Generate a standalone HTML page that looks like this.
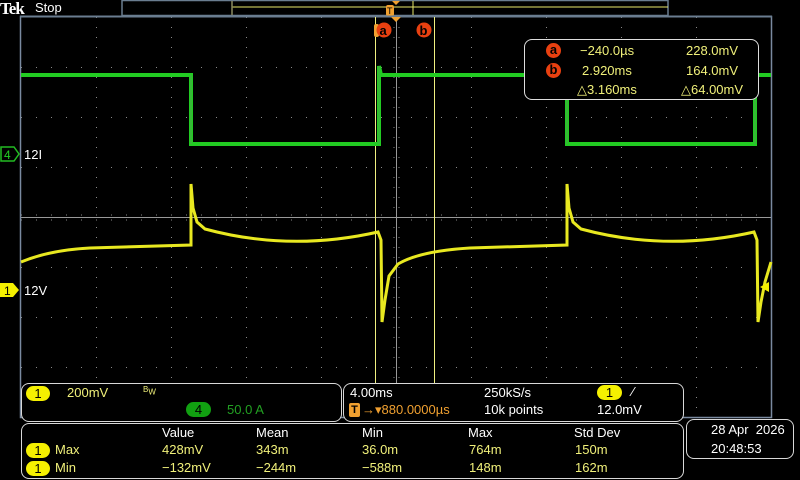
<!DOCTYPE html>
<html><head><meta charset="utf-8"><style>
html,body{margin:0;padding:0;background:#000;width:800px;height:480px;overflow:hidden;font-family:"Liberation Sans",sans-serif}
.t{position:absolute;white-space:nowrap;font-size:13px;color:#f0f07a}
.w{color:#fff}
.pill{position:absolute;background:#f5f000;color:#000;border-radius:8px;font-size:13px;text-align:center;height:15px;line-height:15px}
.box{position:absolute;border:1px solid #d8d8d8;border-radius:8px;box-sizing:border-box}
</style></head><body>
<svg width="800" height="480" style="position:absolute;left:0;top:0">
<!-- top bar -->
<rect x="122" y="0.5" width="546" height="15" fill="none" stroke="#6a7d90" stroke-width="1.5"/>
<line x1="232" y1="7" x2="668" y2="7" stroke="#e8e86a" stroke-width="1"/>
<line x1="232" y1="1" x2="232" y2="15" stroke="#8a8a60" stroke-width="1.5"/>
<line x1="413" y1="1" x2="413" y2="15" stroke="#e8e86a" stroke-width="1"/>
<polygon points="392,1 400,1 396,5" fill="#f0a030"/>
<rect x="386" y="5" width="8" height="11" rx="2" fill="#f0a030"/>
<text x="387" y="14" font-size="9" fill="#000" font-family="Liberation Sans">T</text>
<!-- grid -->
<g stroke="#888" stroke-width="1" stroke-dasharray="1 9">
<line x1="96.5" y1="17" x2="96.5" y2="417"/><line x1="171.5" y1="17" x2="171.5" y2="417"/><line x1="246.5" y1="17" x2="246.5" y2="417"/><line x1="321.5" y1="17" x2="321.5" y2="417"/><line x1="471.5" y1="17" x2="471.5" y2="417"/><line x1="546.5" y1="17" x2="546.5" y2="417"/><line x1="621.5" y1="17" x2="621.5" y2="417"/><line x1="696.5" y1="17" x2="696.5" y2="417"/>
</g>
<g stroke="#888" stroke-width="1" stroke-dasharray="1 14">
<line x1="21" y1="67.5" x2="771" y2="67.5"/><line x1="21" y1="117.5" x2="771" y2="117.5"/><line x1="21" y1="167.5" x2="771" y2="167.5"/><line x1="21" y1="267.5" x2="771" y2="267.5"/><line x1="21" y1="317.5" x2="771" y2="317.5"/><line x1="21" y1="367.5" x2="771" y2="367.5"/>
</g>
<g stroke="#888" stroke-width="1">
<line x1="21" y1="215" x2="771" y2="215" stroke-dasharray="1 14"/>
<line x1="21" y1="220" x2="771" y2="220" stroke-dasharray="1 14"/>
<line x1="394" y1="17" x2="394" y2="417" stroke-dasharray="1 9"/>
<line x1="399" y1="17" x2="399" y2="417" stroke-dasharray="1 9"/>
</g>
<line x1="21" y1="217.5" x2="771" y2="217.5" stroke="#999" stroke-width="1"/>
<line x1="396.5" y1="17" x2="396.5" y2="417" stroke="#999" stroke-width="1"/>
<rect x="20.5" y="16.5" width="751" height="401" fill="none" stroke="#7a8aa0" stroke-width="1.5"/>
<line x1="20" y1="16.5" x2="772" y2="16.5" stroke="#6a7d90" stroke-width="2"/>
<!-- cursors -->
<line x1="375.5" y1="17" x2="375.5" y2="417" stroke="#f0f080" stroke-width="1"/>
<line x1="434.5" y1="17" x2="434.5" y2="417" stroke="#f0f080" stroke-width="1"/>
<polygon points="391,17 401,17 396,22" fill="#f0a030"/>
<rect x="374" y="24" width="5" height="13" rx="2" fill="#f0a030"/>
<circle cx="384" cy="30" r="7.5" fill="#e84010"/><text x="379.5" y="35" font-size="13" font-weight="bold" fill="#000">a</text>
<circle cx="424" cy="30" r="7.5" fill="#e84010"/><text x="419.5" y="35" font-size="13" font-weight="bold" fill="#000">b</text>
<!-- green -->
<path d="M21,75 L191,75 L191,144 L379,144 L379,66 L381,75 L567,75 L567,144 L755,144 L755,66 L757,75 L771,75" fill="none" stroke="#22cc22" stroke-width="4"/>
<path d="M191,75 L191,144 M379,144 L379,66 M567,75 L567,144 M755,144 L755,66" stroke="#44aa44" stroke-width="1.2" fill="none"/>
<!-- yellow -->
<path d="M21,262 Q50,250 90,248 L191,245 L191,184 L193,208 L197,222 L205,229 Q290,252 378,232 L381,240 L382,322 L385,300 L389,276 L398,264 Q420,251 470,248 L567,245 L567,184 L569,208 L573,222 L581,229 Q666,252 754,232 L757,240 L758,322 L761,302 L765,282 L771,262" fill="none" stroke="#e8e820" stroke-width="3"/>
<!-- left markers -->
<path d="M1,147 L14,147 L19,154 L14,161 L1,161 Z" fill="#000" stroke="#22bb22" stroke-width="1.5"/>
<text x="4" y="159" font-size="12" fill="#22cc22">4</text>
<path d="M0,283 L13,283 L19,290 L13,297 L0,297 Z" fill="#f5f000"/>
<text x="4" y="295" font-size="12" fill="#000">1</text>
<polygon points="760,287 769,282 769,292" fill="#f5f000"/>
</svg>
<div class="t w" style="left:0;top:-1px;font-family:'Liberation Serif',serif;font-weight:bold;font-size:17px;letter-spacing:-1px">Tek</div>
<div class="t w" style="left:35px;top:0;font-size:13px">Stop</div>
<div class="t w" style="left:24px;top:147px;font-size:13px">12I</div>
<div class="t w" style="left:24px;top:283px;font-size:13px">12V</div>
<!-- cursor readout -->
<div class="box" style="left:524px;top:39px;width:235px;height:61px;background:#000;border-color:#ddd"></div>
<div style="position:absolute;left:546px;top:43px;width:15px;height:15px;border-radius:50%;background:#e84010;color:#000;font-weight:bold;font-size:13px;text-align:center;line-height:14px">a</div>
<div style="position:absolute;left:546px;top:63px;width:15px;height:15px;border-radius:50%;background:#e84010;color:#000;font-weight:bold;font-size:13px;text-align:center;line-height:14px">b</div>
<div class="t" style="left:580px;top:43px">−240.0µs</div><div class="t" style="left:686px;top:43px">228.0mV</div>
<div class="t" style="left:582px;top:63px">2.920ms</div><div class="t" style="left:686px;top:63px">164.0mV</div>
<div class="t" style="left:577px;top:82px">△3.160ms</div><div class="t" style="left:681px;top:82px">△64.00mV</div>
<!-- ch panel -->
<div class="box" style="left:21px;top:383px;width:321px;height:39px;background:#000"></div>
<div class="pill" style="left:26px;top:386px;width:24px">1</div>
<div class="t" style="left:67px;top:385px">200mV</div>
<div class="t" style="left:143px;top:385px;font-size:8px">B<sub style="font-size:8px">W</sub></div>
<div class="pill" style="left:186px;top:402px;width:25px;background:#11a011">4</div>
<div class="t" style="left:227px;top:402px;color:#22a022">50.0 A</div>
<!-- timebase panel -->
<div class="box" style="left:343px;top:383px;width:341px;height:39px;background:#000"></div>
<div class="t w" style="left:350px;top:385px">4.00ms</div>
<div style="position:absolute;left:349px;top:403px;width:11px;height:14px;background:#f0a030;border-radius:2px;color:#000;font-size:11px;font-weight:bold;text-align:center;line-height:14px">T</div>
<div class="t" style="left:362px;top:402px;color:#f0a030">→▾880.0000µs</div>
<div class="t w" style="left:484px;top:385px">250kS/s</div>
<div class="t w" style="left:484px;top:402px">10k points</div>
<div class="pill" style="left:597px;top:385px;width:25px">1</div>
<div class="t w" style="left:632px;top:384px">⁄</div>
<div class="t w" style="left:597px;top:402px">12.0mV</div>
<!-- meas panel -->
<div class="box" style="left:21px;top:423px;width:663px;height:56px;background:#000"></div>
<div class="t w" style="left:162px;top:425px">Value</div>
<div class="t w" style="left:256px;top:425px">Mean</div>
<div class="t w" style="left:362px;top:425px">Min</div>
<div class="t w" style="left:468px;top:425px">Max</div>
<div class="t w" style="left:574px;top:425px">Std Dev</div>
<div class="pill" style="left:26px;top:443px;width:24px">1</div><div class="t" style="left:55px;top:442px">Max</div>
<div class="pill" style="left:26px;top:461px;width:24px">1</div><div class="t" style="left:55px;top:460px">Min</div>
<div class="t" style="left:162px;top:442px">428mV</div><div class="t" style="left:256px;top:442px">343m</div><div class="t" style="left:362px;top:442px">36.0m</div><div class="t" style="left:469px;top:442px">764m</div><div class="t" style="left:575px;top:442px">150m</div>
<div class="t" style="left:162px;top:460px">−132mV</div><div class="t" style="left:256px;top:460px">−244m</div><div class="t" style="left:362px;top:460px">−588m</div><div class="t" style="left:469px;top:460px">148m</div><div class="t" style="left:575px;top:460px">162m</div>
<!-- date -->
<div class="box" style="left:686px;top:419px;width:108px;height:40px;background:#000"></div>
<div class="t w" style="left:711px;top:422px">28 Apr&nbsp; 2026</div>
<div class="t w" style="left:711px;top:441px">20:48:53</div>
</body></html>
